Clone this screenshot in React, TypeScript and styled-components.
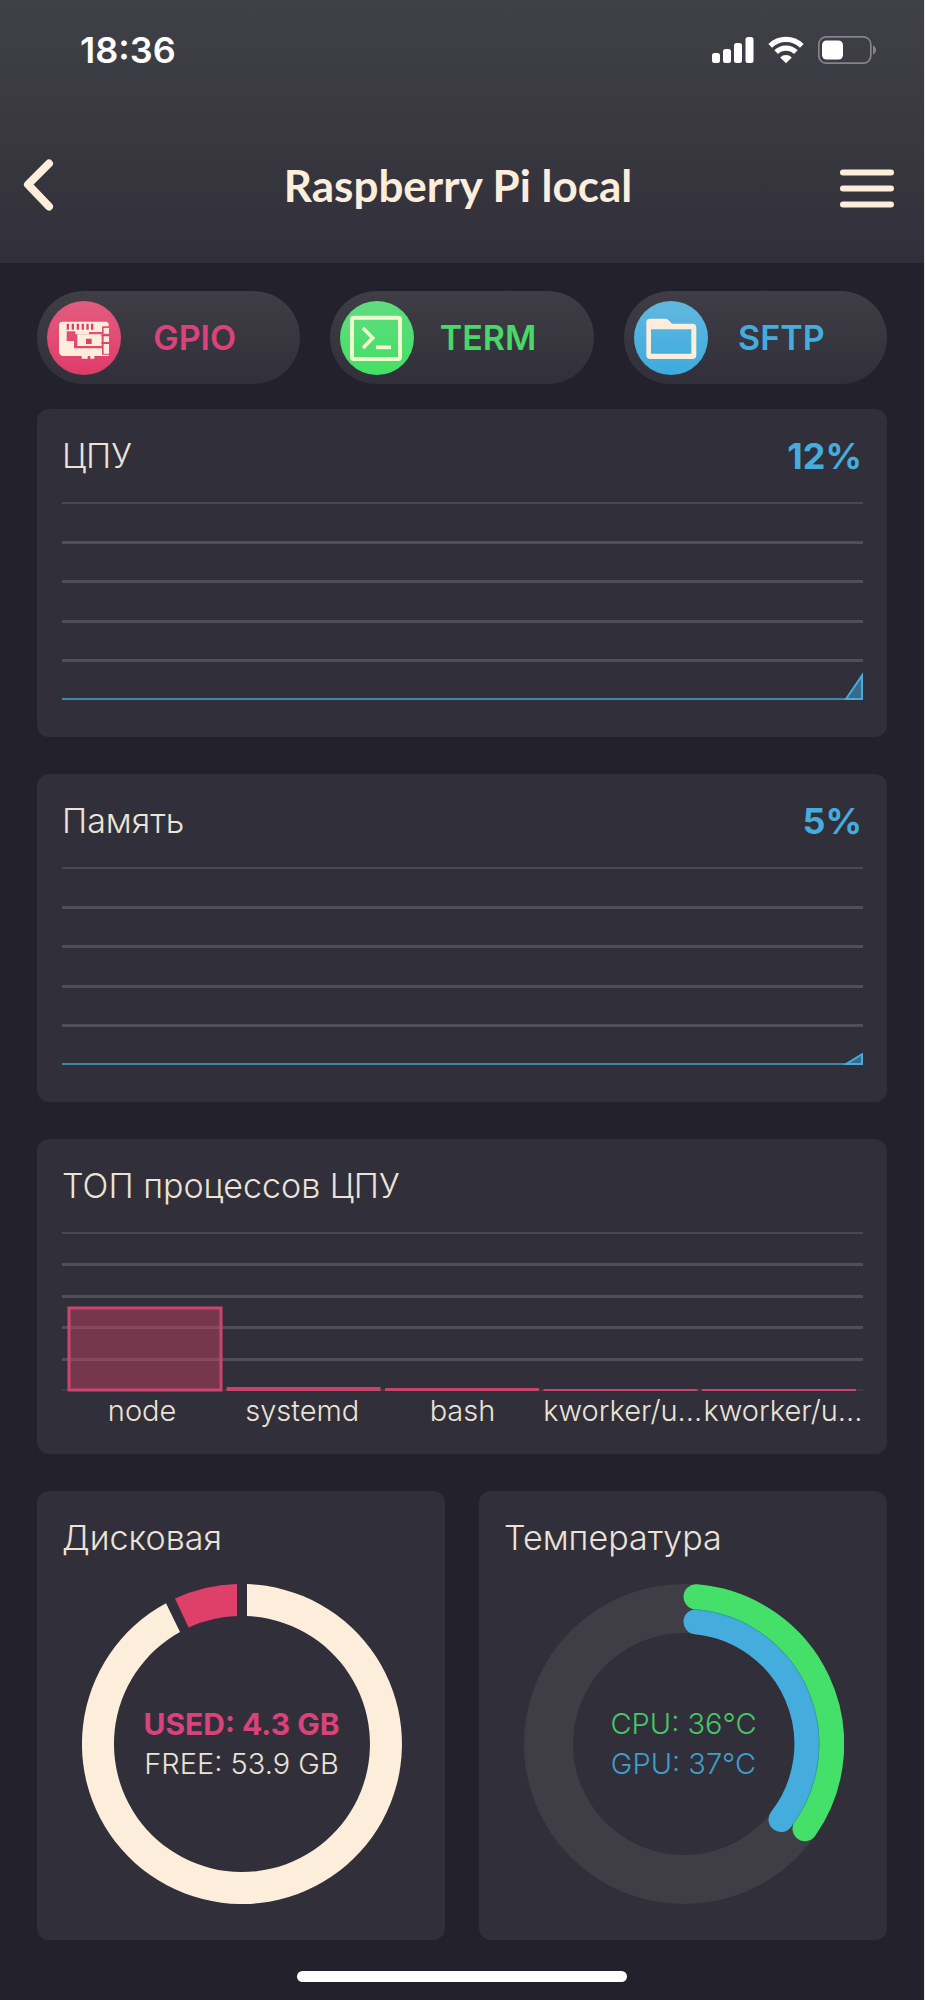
import React from "react";
import styled, { createGlobalStyle } from "styled-components";

const color = {
  page: "#22212c",
  card: "#31303a",
  raised: "#3f3e46",
  grid: "#504e57",
  cream: "#fdeedb",
  text: "#ebe3d6",
  pink: "#df4069",
  green: "#45e069",
  blue: "#44addd",
};

const GlobalStyle = createGlobalStyle`
  *, *::before, *::after { box-sizing: border-box; }
  body {
    margin: 0;
    background: ${color.page};
    color: ${color.text};
    font-family: Inter, "Liberation Sans", sans-serif;
    -webkit-font-smoothing: antialiased;
  }
  svg { display: block; }
`;

const Screen = styled.div`
  min-height: 100vh;
  display: flex;
  flex-direction: column;
  border-right: 1px solid #e9e9ee;
`;

const Header = styled.header`
  padding-bottom: 10px;
  background: linear-gradient(#404047, ${color.card});
`;

const StatusBar = styled.div`
  height: 100px;
  padding: 0 48px 0 80px;
  display: flex;
  align-items: center;
  justify-content: space-between;
`;

const Clock = styled.time`
  color: #fff;
  font-size: 36px;
  font-weight: 600;
  line-height: 44px;
`;

const StatusIcons = styled.div`
  display: flex;
  align-items: center;
  gap: 14px;
`;

const NavBar = styled.nav`
  margin-top: 16px;
  height: 137px;
  padding: 0 28px 0 20px;
  display: grid;
  grid-template-columns: 1fr auto 1fr;
  align-items: center;
`;

const IconButton = styled.button<{ $end?: boolean }>`
  justify-self: ${(p) => (p.$end ? "end" : "start")};
  padding: 0;
  border: 0;
  background: none;
  color: ${color.cream};
  cursor: pointer;
`;

const Title = styled.h1`
  margin: 0;
  color: ${color.cream};
  font-family: Lato, sans-serif;
  font-size: 44px;
  font-weight: 700;
  line-height: 52px;
`;

const Content = styled.main`
  padding: 28px 37px 0;
`;

const Actions = styled.div`
  display: grid;
  grid-template-columns: repeat(3, 1fr);
  gap: 30px;
  margin-bottom: 25px;
`;

const ActionButton = styled.button<{ $tint: string }>`
  height: 93px;
  padding: 0 32px 0 10px;
  display: flex;
  align-items: center;
  border: 0;
  border-radius: 47px;
  background: linear-gradient(${color.raised}, ${color.card});
  color: ${(p) => p.$tint};
  font: 600 34px/44px Inter, sans-serif;
  cursor: pointer;
`;

const ActionBadge = styled.span<{ $from: string; $to: string }>`
  flex: none;
  width: 74px;
  height: 74px;
  border-radius: 50%;
  background: linear-gradient(${(p) => p.$from}, ${(p) => p.$to});
`;

const ActionLabel = styled.span`
  flex: 1;
  text-align: center;
`;

const Stack = styled.div`
  display: flex;
  flex-direction: column;
  gap: 37px;
`;

const Pair = styled.div`
  display: grid;
  grid-template-columns: 1fr 1fr;
  gap: 34px;
`;

const Card = styled.section`
  padding: 25px 24px 36px 25px;
  border-radius: 12px;
  background: ${color.card};
`;

const CardHead = styled.div`
  display: flex;
  justify-content: space-between;
  margin-bottom: 24px;
`;

const CardTitle = styled.h2`
  margin: 0;
  font-size: 34px;
  font-weight: 300;
  line-height: 44px;
  white-space: nowrap;
`;

const Percent = styled.span`
  padding-right: 1px;
  color: ${color.blue};
  font-size: 36px;
  font-weight: 700;
  line-height: 44px;
`;

const Plot = styled.svg<{ $height: number }>`
  width: 100%;
  height: ${(p) => p.$height}px;
  overflow: visible;
`;

const BarLabels = styled.div`
  display: grid;
  grid-template-columns: repeat(5, minmax(0, 1fr));
  margin-bottom: -13px;
`;

const BarLabel = styled.span`
  display: flex;
  justify-content: center;
  font-size: 29px;
  font-weight: 300;
  line-height: 40px;
  white-space: nowrap;
`;

const RingBox = styled.div`
  display: grid;
  place-items: center;
  & > * { grid-area: 1 / 1; }
`;

const RingText = styled.div`
  text-align: center;
`;

const RingLine = styled.p<{ $tint?: string; $bold?: boolean }>`
  margin: 0;
  color: ${(p) => p.$tint ?? color.text};
  font-size: ${(p) => (p.$bold ? 30 : 29)}px;
  font-weight: ${(p) => (p.$bold ? 700 : 300)};
  line-height: 40px;
`;

const Footer = styled.footer`
  margin-top: auto;
  padding: 31px 0 18px;
`;

const HomeIndicator = styled.div`
  width: 330px;
  height: 11px;
  margin: 0 auto;
  border-radius: 6px;
  background: #fff;
`;

const PLOT_WIDTH = 801;

function GridLines({ height, base }: { height: number; base?: boolean }) {
  const rows = base ? [0, 1, 2, 3, 4, 5] : [0, 1, 2, 3, 4];
  return (
    <>
      {rows.map((i) => {
        const y = Math.round((height * i) / 5);
        return (
          <line
            key={i}
            x1={0}
            x2={PLOT_WIDTH}
            y1={i % 5 ? y + 0.5 : y}
            y2={i % 5 ? y + 0.5 : y}
            stroke={i % 5 ? color.grid : "#4a4851"}
            strokeWidth={i === 0 ? 2 : i === 5 ? 1 : 3}
          />
        );
      })}
    </>
  );
}

function UsageCard({ title, value }: { title: string; value: number }) {
  const h = 196;
  const top = h - (h * value) / 100;
  return (
    <Card>
      <CardHead>
        <CardTitle>{title}</CardTitle>
        <Percent>{value}%</Percent>
      </CardHead>
      <Plot $height={h + 3} viewBox={`0 -1 ${PLOT_WIDTH} ${h + 3}`} preserveAspectRatio="none" aria-hidden="true">
        <GridLines height={h} />
        <line x1={0} x2={PLOT_WIDTH} y1={h} y2={h} stroke="#3c87aa" strokeWidth={2} />
        <path d={`M784 ${h}L800 ${top}V${h}Z`} fill="#386b89" stroke={color.blue} strokeWidth={2} />
      </Plot>
    </Card>
  );
}

const processes = [
  { name: "node", height: 82 },
  { name: "systemd", height: 3 },
  { name: "bash", height: 2 },
  { name: "kworker/u...", height: 1 },
  { name: "kworker/u...", height: 1 },
];

function ProcessCard() {
  const h = 157;
  return (
    <Card>
      <CardHead>
        <CardTitle>ТОП процессов ЦПУ</CardTitle>
      </CardHead>
      <Plot $height={h + 2} viewBox={`0 -1 ${PLOT_WIDTH} ${h + 2}`} preserveAspectRatio="none" aria-hidden="true">
        <GridLines height={h} base />
        {processes.map((p, i) => {
          const x = 6 + i * 158.5;
          return p.height > 10 ? (
            <rect
              key={i}
              x={x + 1}
              y={h - p.height}
              width={152}
              height={p.height}
              fill={color.pink}
              fillOpacity={0.4}
              stroke="#cc446f"
              strokeWidth={3}
            />
          ) : (
            <rect key={i} x={x} y={h - p.height} width={154} height={p.height + 1} fill="#c8446d" />
          );
        })}
      </Plot>
      <BarLabels>
        {processes.map((p, i) => (
          <BarLabel key={i}>{p.name}</BarLabel>
        ))}
      </BarLabels>
    </Card>
  );
}

function DiskRing() {
  return (
    <svg width="320" height="320" viewBox="-160 -160 320 320" aria-hidden="true">
      <path
        d="M5 -159.9A160 160 0 1 1 -76 -140.8L-62 -112A128 128 0 1 0 5 -127.9Z"
        fill={color.cream}
      />
      <path d="M-5 -159.9V-127.9A128 128 0 0 0 -53.4 -116.5L-67 -145.4A160 160 0 0 1 -5 -159.9Z" fill={color.pink} />
    </svg>
  );
}

function TemperatureRing() {
  return (
    <svg width="320" height="320" viewBox="-160 -160 320 320" fill="none" aria-hidden="true">
      <circle r="135.5" stroke={color.raised} strokeWidth="49" />
      <g strokeWidth="25" strokeLinecap="round">
        <path d="M12 -147.2A147.7 147.7 0 0 1 121 84.7" stroke={color.green} />
        <path d="M12 -122.3A122.9 122.9 0 0 1 97 75.5" stroke={color.blue} />
      </g>
      <path d="M12 -134.5A135 135 0 0 1 108.5 80.5" stroke="#36a497" strokeWidth="1" />
    </svg>
  );
}

const GpioIcon = () => (
  <svg width="74" height="74" viewBox="0 0 222 222" aria-hidden="true">
    <path
      d="M46 62H176Q185 62 185 70V76H165V93H126V100H85V91H59V120H81V142H165V161H185V165H142V173H130V165H122V173H104V165H50Q36 165 36 151V73Q36 62 46 62Z"
      fill={color.cream}
    />
    <path d="M91 100H164V135H91ZM170 81H186V98H170ZM170 105H186V123H170ZM170 129H186V158H170Z" fill={color.cream} />
    <path
      d="M59 68h7v18h-7zM74 68h7v18h-7zM89 68h7v18h-7zM104 68h7v18h-7zM118 68h7v18h-7zM132 68h7v18h-7zM117 113h17v16h-17zM163 102h24v4h-24zM163 124h24v4h-24z"
      fill={color.pink}
    />
  </svg>
);

const TermIcon = () => (
  <svg width="74" height="74" viewBox="0 0 222 222" fill="none" stroke="#effbcf" aria-hidden="true">
    <rect x="36" y="50" width="144" height="124" rx="5" strokeWidth="12" />
    <path d="M69 81L98 111L69 141" strokeWidth="11" />
    <path d="M108 139H153" strokeWidth="11" />
  </svg>
);

const FolderIcon = () => (
  <svg width="74" height="74" viewBox="0 0 222 222" aria-hidden="true">
    <path
      d="M48 53H94Q99 53 103 57L114 68H175Q187 68 187 80V162Q187 174 175 174H49Q37 174 37 162V64Q37 53 48 53ZM51 85V158H172V85Z"
      fill={color.cream}
      fillRule="evenodd"
    />
  </svg>
);

const SignalIcon = () => (
  <svg width="42" height="28" viewBox="0 0 42 28" fill="#fff" role="img" aria-label="Signal">
    <rect x="0" y="17" width="8" height="10" rx="2.5" />
    <rect x="11" y="13" width="8" height="14" rx="2.5" />
    <rect x="22" y="7" width="8" height="20" rx="2.5" />
    <rect x="33.500" y="1" width="8" height="26" rx="2.5" />
  </svg>
);

const WifiIcon = () => (
  <svg width="36" height="28" viewBox="0 0 36 28" role="img" aria-label="Wi-Fi">
    <g fill="none" stroke="#fff" strokeWidth="5.200">
      <path d="M2.200 9.800A22.500 22.500 0 0 1 33.800 9.800" />
      <path d="M8.200 16.200A13.800 13.800 0 0 1 27.800 16.200" />
    </g>
    <path d="M12.200 21.400A8.500 8.500 0 0 1 23.800 21.400L18 27.300Z" fill="#fff" />
  </svg>
);

const BatteryIcon = () => (
  <svg width="58" height="28" viewBox="0 0 58 28" role="img" aria-label="Battery">
    <rect x="0.800" y="0.800" width="52" height="26.400" rx="7.500" fill="none" stroke="#85848b" strokeWidth="1.700" />
    <rect x="4" y="4.500" width="21" height="19" rx="4.500" fill="#fff" />
    <path d="M55 9.500Q58 11 58 14T55 18.500Z" fill="#85848b" />
  </svg>
);

export default function App() {
  return (
    <Screen>
      <GlobalStyle />
      <Header>
        <StatusBar>
          <Clock>18:36</Clock>
          <StatusIcons>
            <SignalIcon />
            <WifiIcon />
            <BatteryIcon />
          </StatusIcons>
        </StatusBar>
        <NavBar>
          <IconButton type="button" aria-label="Back">
            <svg width="36" height="56" viewBox="0 0 36 56" fill="none" stroke="currentColor" strokeWidth="8">
              <path d="M29 6.500L8 27.500L29 49.500" strokeLinecap="round" strokeLinejoin="round" />
            </svg>
          </IconButton>
          <Title>Raspberry Pi local</Title>
          <IconButton type="button" aria-label="Menu" $end>
            <svg width="56" height="56" viewBox="0 0 56 56" fill="none" stroke="currentColor" strokeWidth="6">
              <path d="M3 15.500H51M3 31.500H51M3 47.500H51" strokeLinecap="round" />
            </svg>
          </IconButton>
        </NavBar>
      </Header>

      <Content>
        <Actions>
          <ActionButton type="button" $tint="#d9437a">
            <ActionBadge $from="#e35c80" $to="#df3c68">
              <GpioIcon />
            </ActionBadge>
            <ActionLabel>GPIO</ActionLabel>
          </ActionButton>
          <ActionButton type="button" $tint="#47d869">
            <ActionBadge $from="#5fdc80" $to="#43e064">
              <TermIcon />
            </ActionBadge>
            <ActionLabel>TERM</ActionLabel>
          </ActionButton>
          <ActionButton type="button" $tint="#44addd">
            <ActionBadge $from="#62b8de" $to="#3cabde">
              <FolderIcon />
            </ActionBadge>
            <ActionLabel>SFTP</ActionLabel>
          </ActionButton>
        </Actions>

        <Stack>
          <UsageCard title="ЦПУ" value={12} />
          <UsageCard title="Память" value={5} />
          <ProcessCard />
          <Pair>
            <Card>
              <CardHead>
                <CardTitle>Дисковая</CardTitle>
              </CardHead>
              <RingBox>
                <DiskRing />
                <RingText>
                  <RingLine $tint="#d9437a" $bold>USED: 4.3 GB</RingLine>
                  <RingLine>FREE: 53.9 GB</RingLine>
                </RingText>
              </RingBox>
            </Card>
            <Card>
              <CardHead>
                <CardTitle>Температура</CardTitle>
              </CardHead>
              <RingBox>
                <TemperatureRing />
                <RingText>
                  <RingLine $tint="#47c766">CPU: 36°C</RingLine>
                  <RingLine $tint="#419dc9">GPU: 37°C</RingLine>
                </RingText>
              </RingBox>
            </Card>
          </Pair>
        </Stack>
      </Content>

      <Footer>
        <HomeIndicator />
      </Footer>
    </Screen>
  );
}
